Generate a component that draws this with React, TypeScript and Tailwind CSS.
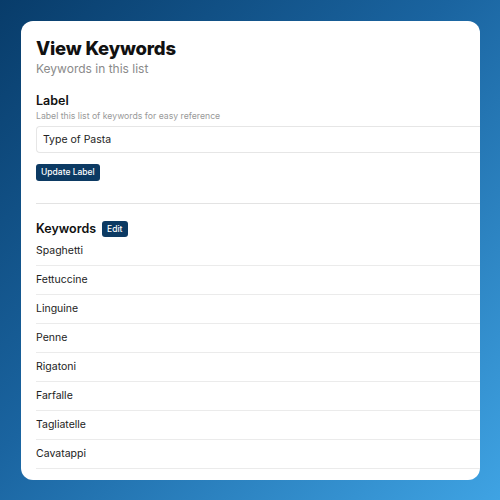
import React from 'react';

const keywords = [
  'Spaghetti',
  'Fettuccine',
  'Linguine',
  'Penne',
  'Rigatoni',
  'Farfalle',
  'Tagliatelle',
  'Cavatappi',
];

const App: React.FC = () => {
  return (
    <div
      className="w-[500px] h-[500px] p-[21px] pr-[20px] pb-[20px] bg-[linear-gradient(135deg,#083c6a_0%,#1a64a0_45%,#3fa3e3_100%)]"
      style={{ fontFamily: 'Inter, "Noto Sans", sans-serif' }}
    >
      <div className="h-full bg-white rounded-[12px] overflow-hidden pl-[15px] pt-[15px]">
        <h1 className="text-[18.5px] leading-[24px] font-extrabold text-[#111] tracking-[-0.2px]">View Keywords</h1>
        <p className="text-[12px] leading-[16px] text-[#8a8a8a] mt-[1px]">Keywords in this list</p>

        <div className="mt-[16px]">
          <h2 className="text-[12.5px] leading-[16px] font-semibold text-[#111]">Label</h2>
          <p className="text-[8.7px] leading-[12px] text-[#999] mt-[1px]">
            Label this list of keywords for easy reference
          </p>
          <div className="mt-[4px] h-[27px] border border-[#e6e6e6] border-r-0 rounded-l-[4px] flex items-center pl-[6px] text-[10.5px] text-[#222]">
            Type of Pasta
          </div>
          <button className="mt-[11px] bg-[#0c3a63] text-white text-[8.5px] font-medium h-[17px] px-[5px] rounded-[3px] flex items-center">
            Update Label
          </button>
        </div>

        <div className="mt-[22px] border-t border-[#e3e3e3]" />

        <div className="mt-[17px] flex items-center gap-[6px]">
          <h2 className="text-[12.5px] leading-[16px] font-semibold text-[#111]">Keywords</h2>
          <button className="bg-[#0c3a63] text-white text-[8.5px] font-medium h-[16px] px-[5px] rounded-[3px] flex items-center">
            Edit
          </button>
        </div>

        <ul className="mt-[0px]">
          {keywords.map((k) => (
            <li
              key={k}
              className="h-[29px] flex items-center border-b border-[#ebebeb] text-[10.5px] text-[#222]"
            >
              {k}
            </li>
          ))}
        </ul>
      </div>
    </div>
  );
};

export default App;
